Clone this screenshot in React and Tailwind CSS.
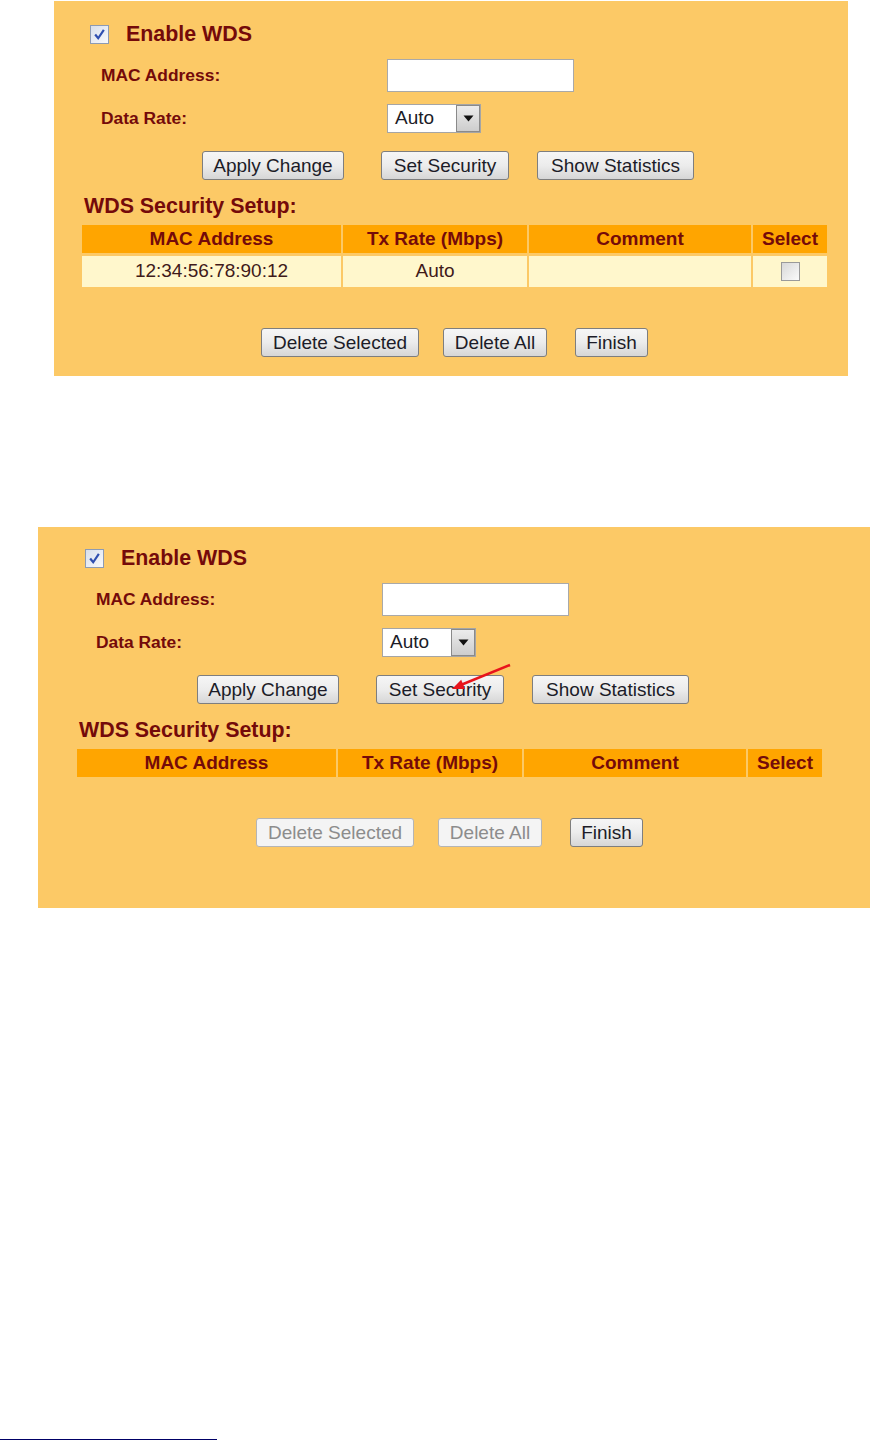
import React from "react";

const maroon = "text-[#740a0a]";

const CheckBox = ({ checked }) => (
  <div
    className={`w-[19px] h-[19px] border flex items-center justify-center ${
      checked
        ? "border-[#8d9bb3] bg-gradient-to-br from-[#d8dfec] to-[#f8f9fc]"
        : "border-[#9a9a9a] bg-gradient-to-br from-[#d8d8d8] to-[#fbfbfb]"
    }`}
  >
    {checked && (
      <svg width="13" height="13" viewBox="0 0 12 12">
        <path d="M2 6 L4.8 9.5 L10 1.8" fill="none" stroke="#2f4fb0" strokeWidth="2" />
      </svg>
    )}
  </div>
);

const Btn = ({ label, width, disabled, className = "" }) => (
  <div
    className={`h-[29px] flex items-center justify-center rounded-[3px] border text-[19px] leading-none ${width} ${className} ${
      disabled
        ? "border-[#b5b5b5] bg-[#f4f4f4] text-[#8c8c8c]"
        : "border-[#7e7e7e] bg-gradient-to-b from-[#f6f6f6] via-[#ececec] to-[#d6d6d6] text-[#1c1c28]"
    }`}
  >
    {label}
  </div>
);

const Panel = ({ outer, pt, h, inner, rows, children }) => (
  <div className={`relative bg-[#fcc966] ${outer} ${h}`}>
    <div className={`flex flex-col ${inner} ${pt}`}>
      {/* Enable WDS */}
      <div className="h-[24px] flex items-center">
        <div className="ml-[8px]">
          <CheckBox checked />
        </div>
        <span className={`ml-[17px] text-[21.4px] font-bold ${maroon}`}>Enable WDS</span>
      </div>

      {/* MAC address */}
      <div className="mt-[13px] h-[33px] flex items-center">
        <span className={`ml-[19px] w-[286px] text-[17.4px] font-bold ${maroon}`}>MAC Address:</span>
        <div className="w-[187px] h-[33px] bg-white border border-[#a9a9a9]"></div>
      </div>

      {/* Data rate */}
      <div className="mt-[12px] h-[29px] flex items-center">
        <span className={`ml-[19px] w-[286px] text-[17.4px] font-bold ${maroon}`}>Data Rate:</span>
        <div className="w-[94px] h-[29px] bg-white border border-[#a5a5a5] flex items-center">
          <span className="flex-1 pl-[7px] text-[19px] text-[#1c1c28]">Auto</span>
          <div className="w-[24px] h-[27px] border border-[#8a8a8a] bg-gradient-to-b from-[#ececec] to-[#cdcdcd] flex items-center justify-center">
            <svg width="11" height="7" viewBox="0 0 11 7">
              <path d="M0.5 0.5 H10.5 L5.5 6.5 Z" fill="#111" />
            </svg>
          </div>
        </div>
      </div>

      {/* Buttons */}
      <div className="mt-[18px] flex">
        <Btn label="Apply Change" width="w-[142px]" className="ml-[120px]" />
        <Btn label="Set Security" width="w-[128px]" className="ml-[37px]" />
        <Btn label="Show Statistics" width="w-[157px]" className="ml-[28px]" />
      </div>

      {/* Security setup */}
      <div className="mt-[14px] h-[24px] flex items-center">
        <span className={`ml-[2px] text-[21.4px] font-bold ${maroon}`}>WDS Security Setup:</span>
      </div>

      <div className="mt-[7px] w-[745px] grid grid-cols-[259px_184px_222px_74px] gap-x-[2px] gap-y-[3px]">
        {["MAC Address", "Tx Rate (Mbps)", "Comment", "Select"].map((t) => (
          <div
            key={t}
            className={`h-[28px] bg-[#ffa500] flex items-center justify-center text-[19px] font-bold ${maroon}`}
          >
            {t}
          </div>
        ))}
        {rows.map((r) => (
          <React.Fragment key={r.mac}>
            <div className="h-[31px] bg-[#fff7cc] flex items-center justify-center text-[19px] text-[#3f1a1a]">
              {r.mac}
            </div>
            <div className="h-[31px] bg-[#fff7cc] flex items-center justify-center text-[19px] text-[#3f1a1a]">
              {r.rate}
            </div>
            <div className="h-[31px] bg-[#fff7cc]"></div>
            <div className="h-[31px] bg-[#fff7cc] flex items-center justify-center">
              <CheckBox />
            </div>
          </React.Fragment>
        ))}
      </div>

      <div className="mt-[41px] flex">
        <Btn label="Delete Selected" width="w-[158px]" className="ml-[179px]" disabled={!rows.length} />
        <Btn label="Delete All" width="w-[104px]" className="ml-[24px]" disabled={!rows.length} />
        <Btn label="Finish" width="w-[73px]" className="ml-[28px]" />
      </div>
    </div>
    {children}
  </div>
);

export default function App() {
  return (
    <div className="h-[1440px] w-[870px] bg-white flex flex-col font-['Liberation_Sans',Arial,sans-serif] overflow-hidden">
      <Panel
        outer="ml-[54px] mt-[1px] w-[794px]"
        h="h-[375px]"
        inner="pl-[28px]"
        pt="pt-[21px]"
        rows={[{ mac: "12:34:56:78:90:12", rate: "Auto" }]}
      />

      <Panel outer="ml-[38px] mt-[151px] w-[832px]" h="h-[381px]" inner="pl-[39px]" pt="pt-[19px]" rows={[]}>
        {/* red pointer arrow */}
        <svg className="absolute left-[400px] top-[130px]" width="80" height="40" viewBox="0 0 80 40">
          <line x1="72" y1="8" x2="24" y2="27.5" stroke="#e8141c" strokeWidth="2.5" />
          <polygon points="14,32 27,32 23.2,22.8" fill="#e8141c" />
        </svg>
      </Panel>

      <div className="mt-auto h-px w-[217px] bg-[#000066]"></div>
    </div>
  );
}
